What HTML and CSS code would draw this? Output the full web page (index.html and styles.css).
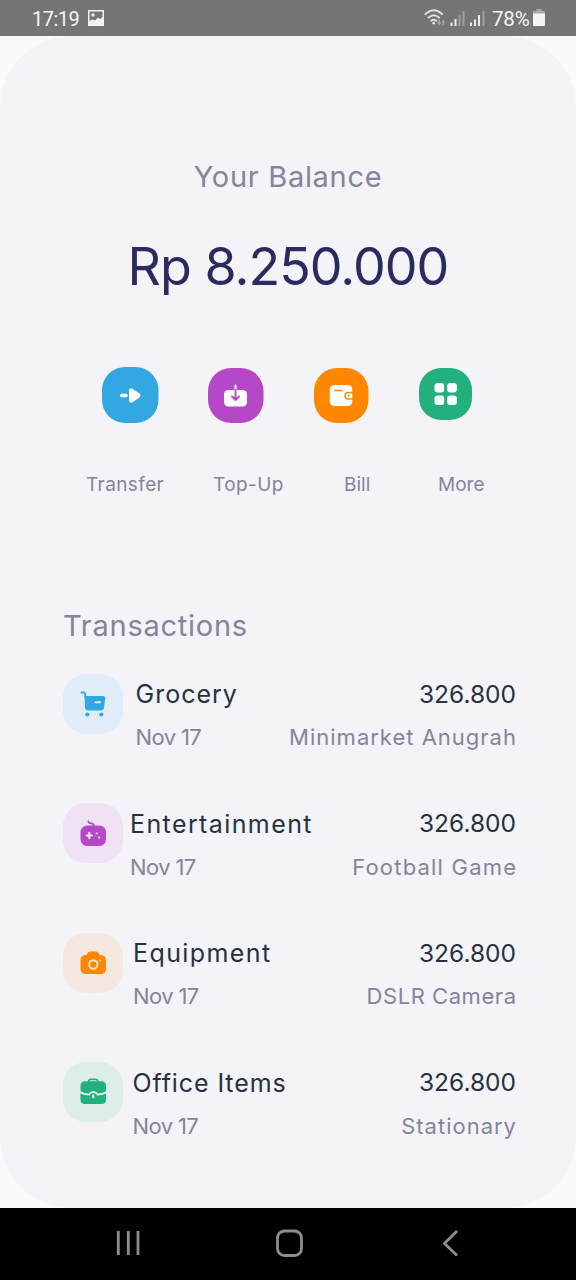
FILE: index.html
```
<!DOCTYPE html>
<html lang="en">
<head>
<meta charset="utf-8">
<title>Balance</title>
<link rel="stylesheet" href="styles.css">
</head>
<body>
<header class="status">
  <div class="status-side">
    <span class="clock">17:19</span>
    <svg class="photo" width="16" height="16" viewBox="0 0 16 16"><rect x=".75" y=".75" width="14.5" height="14.5" fill="none" stroke="#f2f2f2" stroke-width="1.5"/><circle cx="5" cy="5" r="1.7" fill="#f2f2f2"/><path d="M1 11l3.500-1.500 2.500 1 3-3 2 1.500 3-2v8H1z" fill="#f2f2f2"/></svg>
  </div>
  <div class="status-side">
    <svg width="62" height="20" viewBox="0 0 62 20"><g fill="none" stroke="#dedede" stroke-width="2" stroke-linecap="round"><path d="M1.500 6Q10 -1.500 18 6M4.500 9.500q5.500-4.500 10.500 0M7.200 12.800q2.600-2 5 0"/></g><circle cx="9.700" cy="15.200" r="1.400" fill="#dedede"/><path d="M13 14.500h1.500v-3H16v3h1.500l-2.200 3zM17.500 14.500l1.800-3 1.800 3h-1v2.500h-1.500v-2.500z" fill="#a6a6a6"/><g stroke-width="2"><path d="M27.500 14.500v3.500M31.500 11v7M47 14.500v3.500M51 11.500v6.500M55 7v11" stroke="#eee"/><path d="M35.500 7v11M39.500 3v15M59.500 3v15" stroke="#a0a0a0"/></g></svg>
    <span class="percent">78%</span>
    <svg width="12" height="18" viewBox="0 0 12 18"><path d="M3.500 0h5v2H12v4H0V2h3.500z" fill="#aaa"/><path d="M0 4.500h12V16q0 1-1 1H1q-1 0-1-1z" fill="#f5f5f5"/></svg>
  </div>
</header>
<main class="screen">
  <section class="balance">
    <h1 class="balance-label">Your Balance</h1>
    <p class="amount">Rp 8.250.000</p>
  </section>
  <nav class="actions">
    <div class="action-icons">
      <svg class="transfer-icon" width="57" height="57" viewBox="0 0 57 57"><rect width="56.500" height="56" rx="23" fill="#32a7e2"/><path d="M19.800 28.500h4.200" stroke="#fff" stroke-width="3.500" stroke-linecap="round"/><path d="M27 24q0-3.800 3.600-2.200l6.400 4.500q3 2.200 0 4.400l-6.400 4.500q-3.600 1.600-3.600-2.200z" fill="#fff"/></svg>
      <svg class="topup-icon" width="56" height="56" viewBox="0 0 56 56"><rect width="55.500" height="55" rx="23" fill="#b548c6"/><rect x="16" y="22" width="23" height="16.500" rx="4.500" fill="#fff"/><path d="M27.500 17.500v4.500" stroke="#fff" stroke-width="2" stroke-linecap="round"/><path d="M27.500 22v10m-3.500-3.500l3.500 3.500 3.500-3.500" fill="none" stroke="#b548c6" stroke-width="1.900" stroke-linecap="round" stroke-linejoin="round"/></svg>
      <svg class="bill-icon" width="55" height="56" viewBox="0 0 55 56"><rect width="54.500" height="55" rx="23" fill="#ff8700"/><rect x="15.800" y="17" width="22.500" height="21" rx="4.500" fill="#fff"/><path d="M21 22.500h7M39 24.500h-4.500q-3.500 0-3.500 3.200t3.500 3.200H39" fill="none" stroke="#ff8700" stroke-width="1.500" stroke-linecap="round"/><circle cx="34.800" cy="27.700" r="1" fill="#ff8700"/></svg>
      <svg class="more-icon" width="53" height="53" viewBox="0 0 53 53"><rect width="53" height="52" rx="22" fill="#22b07d"/><g fill="#fff"><rect x="15.500" y="15" width="9.700" height="9.500" rx="3"/><rect x="28.200" y="15" width="9.700" height="9.500" rx="3"/><rect x="15.500" y="27.500" width="9.700" height="9.500" rx="3"/><rect x="28.200" y="27.500" width="9.700" height="9.500" rx="3"/></g></svg>
    </div>
    <div class="action-labels"><span class="l-transfer">Transfer</span><span class="l-topup">Top-Up</span><span class="l-bill">Bill</span><span class="l-more">More</span></div>
  </nav>
  <section class="transactions">
    <h2 class="heading">Transactions</h2>
    <article class="row">
      <svg class="tile blue" viewBox="0 0 60 60"><path d="M18.500 18.500h2q1.200 0 1.400 1.200l.6 3.300" fill="none" stroke="#32a7e2" stroke-width="1.900" stroke-linecap="round"/><path d="M21.500 22H39.500q3.200 0 2.700 3.200l-1.200 8.600q-.4 2.700-3.200 2.700H25q-2.600 0-3-2.700z" fill="#32a7e2"/><path d="M32.500 28.300h4.500" stroke="#e0edf9" stroke-width="1.900" stroke-linecap="round"/><circle cx="24.300" cy="40.500" r="2.100" fill="#32a7e2"/><circle cx="38.300" cy="40.500" r="2.100" fill="#32a7e2"/></svg>
      <div class="details grocery"><h3>Grocery</h3><p>Nov 17</p></div>
      <div class="value"><b>326.800</b><span class="v-market">Minimarket Anugrah</span></div>
    </article>
    <article class="row">
      <svg class="tile purple" viewBox="0 0 60 60"><path d="M25.500 18.500q.2 1.800 2.700 1.900t2.600 2.600" fill="none" stroke="#b548c6" stroke-width="1.800" stroke-linecap="round"/><rect x="17.500" y="22.500" width="25.500" height="20.500" rx="6.500" fill="#b548c6"/><path d="M26.300 29.800v5.400M23.600 32.500h5.400" stroke="#f4e6f7" stroke-width="2" stroke-linecap="round"/><circle cx="33.700" cy="30.500" r="1.100" fill="#f4e6f7"/><circle cx="36.200" cy="34.500" r="1.100" fill="#f4e6f7"/></svg>
      <div class="details entertainment"><h3>Entertainment</h3><p>Nov 17</p></div>
      <div class="value"><b>326.800</b><span class="v-game">Football Game</span></div>
    </article>
    <article class="row">
      <svg class="tile orange" viewBox="0 0 60 60"><path d="M22.500 22q1.300 0 1.800-1.500.7-2 3-2h5.500q2.200 0 3 2 .5 1.500 1.700 1.500 5.500.3 5.500 5.500v8q0 5.500-5.500 5.500h-14.500q-5.500 0-5.500-5.500v-8q0-5.200 5-5.500z" fill="#ff8700"/><circle cx="30.300" cy="31.500" r="4.200" fill="none" stroke="#fbe6d3" stroke-width="1.900"/><circle cx="37" cy="27.500" r="1.100" fill="#fbe6d3"/></svg>
      <div class="details equipment"><h3>Equipment</h3><p>Nov 17</p></div>
      <div class="value"><b>326.800</b><span class="v-dslr">DSLR Camera</span></div>
    </article>
    <article class="row">
      <svg class="tile green" viewBox="0 0 60 60"><path d="M25.500 19.500q.3-2.200 2.500-2.200h4.500q2.200 0 2.500 2.200" fill="none" stroke="#22b07d" stroke-width="1.800"/><path d="M22 19.200h16.500q4.500 0 4.500 4.500v5.500q-4 2.300-8.300 2.300-1.200-2.500-4.400-2.500t-4.400 2.500q-4.400 0-8.400-2.300v-5.500q0-4.500 4.500-4.500z" fill="#22b07d"/><path d="M17.500 31.500q4 2.200 9 2 .7-2.500 3.800-2.500t3.800 2.500q4.900.2 8.900-2v6.500q0 4-4.500 4H22q-4.500 0-4.500-4z" fill="#22b07d"/><path d="M30.300 33.500v2" stroke="#ddeeea" stroke-width="2.200" stroke-linecap="round"/></svg>
      <div class="details office"><h3>Office Items</h3><p>Nov 17</p></div>
      <div class="value"><b>326.800</b><span class="v-stationary">Stationary</span></div>
    </article>
  </section>
</main>
<footer class="navbar">
  <svg width="28" height="28" viewBox="0 0 28 28"><path d="M3.300 2v24M13.300 2v24M23 2v24" stroke="#8e8e8e" stroke-width="2.800"/></svg>
  <svg width="28" height="28" viewBox="0 0 28 28"><rect x="1.500" y="2" width="24" height="24.500" rx="7" fill="none" stroke="#8e8e8e" stroke-width="2.800"/></svg>
  <svg width="28" height="28" viewBox="0 0 28 28"><path d="M21 2L8.500 14.500l12.500 12" fill="none" stroke="#8e8e8e" stroke-width="2.800"/></svg>
</footer>
</body>
</html>
```
FILE: styles.css
```
* { box-sizing: border-box; margin: 0; }
h1, h2, h3, p, b { font-weight: 400; }
svg { display: block; flex: none; }
body { width: 576px; height: 1280px; background: #fafafa; font-family: Inter, "Liberation Sans", sans-serif; color: #878398; overflow: hidden; white-space: nowrap; }
.status { height: 36px; background: #757575; color: #f5f5f5; display: flex; justify-content: space-between; padding: 0 31px 0 32px; font-family: Roboto, sans-serif; }
.status-side { display: flex; align-items: center; }
.clock { font-size: 20px; width: 56px; letter-spacing: -.5px; padding-top: 1px; }
.percent { font-size: 20.500px; width: 41px; margin-left: 6px; padding-top: 1px; letter-spacing: -.2px; }
.screen { height: 1172px; background: #f3f3f8; border-radius: 72px; padding: 121px 60px 0 63px; }
.balance { text-align: center; margin-left: -3px; }
.balance-label { font-size: 29px; line-height: 40px; letter-spacing: .7px; }
.amount { font-size: 52px; line-height: 60px; margin-top: 40px; color: #2b2b5e; letter-spacing: -1px; }
.action-icons { display: flex; margin: 70px 0 0 39px; align-items: flex-start; height: 57px; }
.topup-icon { margin: 1px 0 0 49px; }
.bill-icon { margin: 1px 0 0 49.500px; }
.more-icon { margin: 1px 0 0 50.500px; }
.action-labels { display: flex; margin: 46px 0 0 23px; font-size: 19px; line-height: 30px; }
.l-transfer { width: 127px; letter-spacing: .4px; }
.l-topup { width: 131px; letter-spacing: .4px; }
.l-bill { width: 94px; }
.heading { font-size: 29px; line-height: 40px; margin: 106px 0 27.500px; letter-spacing: .75px; }
.row { height: 129.600px; display: flex; align-items: flex-start; }
.tile { width: 60px; height: 60px; border-radius: 23px; }
.blue { background: #e0edf9; }
.purple { background: #eee2f4; }
.orange { background: #f5e8e1; }
.green { background: #ddeeea; }
.details { padding-top: 2.500px; }
.details h3 { color: #26323f; font-size: 25px; line-height: 36px; }
.details p { font-size: 22px; line-height: 30px; margin-top: 10px; letter-spacing: -.6px; }
.grocery { margin-left: 12.500px; }
.grocery h3 { letter-spacing: 1px; }
.entertainment { margin-left: 7px; }
.entertainment h3 { letter-spacing: 1.400px; }
.equipment { margin-left: 10px; }
.equipment h3 { letter-spacing: 1.400px; }
.office { margin-left: 9.500px; }
.office h3 { letter-spacing: .9px; }
.value { margin-left: auto; padding-top: 2px; display: flex; flex-direction: column; align-items: flex-end; }
.value b { color: #26323f; font-size: 24.500px; line-height: 36px; }
.value span { font-size: 22px; line-height: 30px; margin-top: 10.500px; }
.value .v-market { letter-spacing: 1px; margin-right: -1px; }
.value .v-game { letter-spacing: 1.200px; margin-right: -1.200px; }
.value .v-dslr { letter-spacing: .55px; margin-right: -.55px; }
.value .v-stationary { letter-spacing: 1px; margin-right: -1px; }
.navbar { height: 72px; background: #000; display: flex; align-items: center; justify-content: space-between; padding: 0 112px 2px 115px; }
```
